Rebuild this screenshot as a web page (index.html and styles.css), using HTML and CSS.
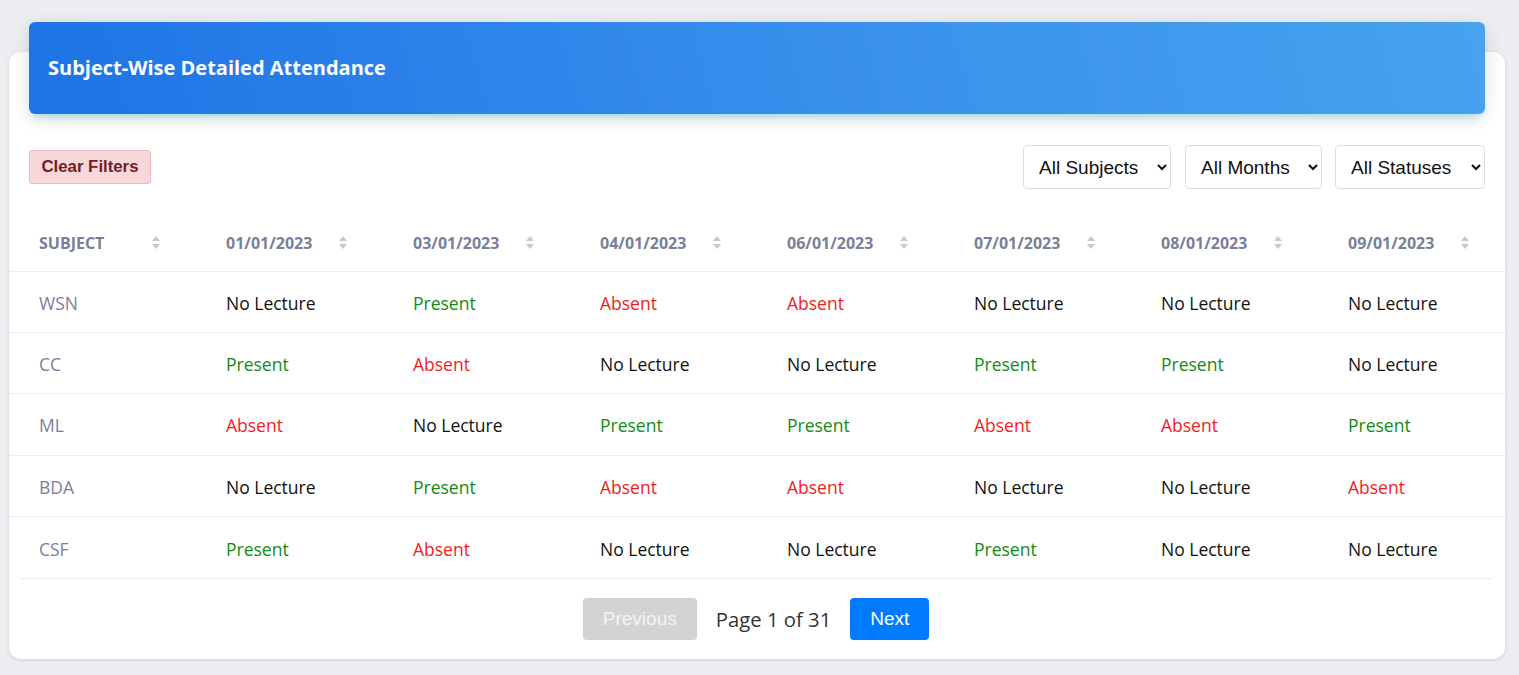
FILE: index.html
```html
<!DOCTYPE html>
<html>
<head>
<meta charset="utf-8">
<link rel="stylesheet" href="styles.css">
</head>
<body>
<div class="card">
  <div class="banner"><h2 class="title">Subject-Wise Detailed Attendance</h2></div>
  <div class="filters">
    <button class="clear">Clear Filters</button>
    <div class="selects">
      <select class="sel"><option>All Subjects</option></select>
      <select class="sel"><option>All Months</option></select>
      <select class="sel"><option>All Statuses</option></select>
    </div>
  </div>
  <table class="grid">
    <thead>
      <tr>
        <th>SUBJECT<span class="sort"><svg width="8" height="13" viewBox="0 0 8 13"><path d="M4 0L8 5H0Z" fill="#c5c8d6"/><path d="M4 13L8 8H0Z" fill="#c5c8d6"/></svg></span></th>
        <th>01/01/2023<span class="sort"><svg width="8" height="13" viewBox="0 0 8 13"><path d="M4 0L8 5H0Z" fill="#c5c8d6"/><path d="M4 13L8 8H0Z" fill="#c5c8d6"/></svg></span></th>
        <th>03/01/2023<span class="sort"><svg width="8" height="13" viewBox="0 0 8 13"><path d="M4 0L8 5H0Z" fill="#c5c8d6"/><path d="M4 13L8 8H0Z" fill="#c5c8d6"/></svg></span></th>
        <th>04/01/2023<span class="sort"><svg width="8" height="13" viewBox="0 0 8 13"><path d="M4 0L8 5H0Z" fill="#c5c8d6"/><path d="M4 13L8 8H0Z" fill="#c5c8d6"/></svg></span></th>
        <th>06/01/2023<span class="sort"><svg width="8" height="13" viewBox="0 0 8 13"><path d="M4 0L8 5H0Z" fill="#c5c8d6"/><path d="M4 13L8 8H0Z" fill="#c5c8d6"/></svg></span></th>
        <th>07/01/2023<span class="sort"><svg width="8" height="13" viewBox="0 0 8 13"><path d="M4 0L8 5H0Z" fill="#c5c8d6"/><path d="M4 13L8 8H0Z" fill="#c5c8d6"/></svg></span></th>
        <th>08/01/2023<span class="sort"><svg width="8" height="13" viewBox="0 0 8 13"><path d="M4 0L8 5H0Z" fill="#c5c8d6"/><path d="M4 13L8 8H0Z" fill="#c5c8d6"/></svg></span></th>
        <th>09/01/2023<span class="sort"><svg width="8" height="13" viewBox="0 0 8 13"><path d="M4 0L8 5H0Z" fill="#c5c8d6"/><path d="M4 13L8 8H0Z" fill="#c5c8d6"/></svg></span></th>
      </tr>
    </thead>
    <tbody>
      <tr><td class="subj">WSN</td><td class="nl">No Lecture</td><td class="p">Present</td><td class="a">Absent</td><td class="a">Absent</td><td class="nl">No Lecture</td><td class="nl">No Lecture</td><td class="nl">No Lecture</td></tr>
      <tr><td class="subj">CC</td><td class="p">Present</td><td class="a">Absent</td><td class="nl">No Lecture</td><td class="nl">No Lecture</td><td class="p">Present</td><td class="p">Present</td><td class="nl">No Lecture</td></tr>
      <tr><td class="subj">ML</td><td class="a">Absent</td><td class="nl">No Lecture</td><td class="p">Present</td><td class="p">Present</td><td class="a">Absent</td><td class="a">Absent</td><td class="p">Present</td></tr>
      <tr><td class="subj">BDA</td><td class="nl">No Lecture</td><td class="p">Present</td><td class="a">Absent</td><td class="a">Absent</td><td class="nl">No Lecture</td><td class="nl">No Lecture</td><td class="a">Absent</td></tr>
      <tr><td class="subj">CSF</td><td class="p">Present</td><td class="a">Absent</td><td class="nl">No Lecture</td><td class="nl">No Lecture</td><td class="p">Present</td><td class="nl">No Lecture</td><td class="nl">No Lecture</td></tr>
    </tbody>
  </table>
  <div class="pager">
    <button class="pbtn prev">Previous</button>
    <span class="pinfo">Page 1 of 31</span>
    <button class="pbtn next">Next</button>
  </div>
</div>
</body>
</html>
```

FILE: styles.css
```css
* { box-sizing: border-box; }
html, body { margin: 0; padding: 0; }
body {
  background: #eceef2;
  font-family: "Open Sans", "Noto Sans", sans-serif;
  padding: 52px 14px 16px 9px;
}
.card {
  background: #fff;
  border-radius: 12px;
  box-shadow: 0 1px 4px rgba(0,0,0,0.12);
  display: flex;
  flex-direction: column;
}
.banner {
  margin: -30px 20px 0 20px;
  height: 92px;
  border-radius: 6px;
  background: linear-gradient(75deg, #1e73e6 0%, #3890ec 55%, #47a2ef 100%);
  box-shadow: 0 4px 20px rgba(0,0,0,0.12), 0 7px 10px -5px rgba(0,188,212,0.35);
  display: flex;
  align-items: center;
  padding-left: 19px;
  padding-bottom: 2px;
}
.title {
  margin: 0;
  color: #fff;
  font-family: "Open Sans", sans-serif;
  font-weight: 700;
  font-size: 20px;
}
.filters {
  display: flex;
  justify-content: space-between;
  align-items: center;
  margin: 31px 20px 0 20px;
  height: 44px;
}
.clear {
  font-family: "Liberation Sans", Arial, sans-serif;
  font-weight: 700;
  font-size: 16.8px;
  color: #721c24;
  background: #f8d7da;
  border: 1px solid #f1b9bf;
  border-radius: 3px;
  height: 34px;
  width: 122px;
  padding: 0;
}
.selects { display: flex; gap: 14px; }
.sel {
  font-family: "Liberation Sans", Arial, sans-serif;
  font-size: 19px;
  color: #111;
  height: 44px;
  background: #fff;
  border: 1px solid #ddd;
  border-radius: 4px;
  padding: 0 8px 0 11px;
}
.sel:nth-child(1) { width: 148px; }
.sel:nth-child(2) { width: 137px; }
.sel:nth-child(3) { width: 150px; margin-left: -1px; }
.grid {
  width: 100%;
  border-collapse: collapse;
  table-layout: fixed;
  margin-top: 26px;
}
.grid th {
  position: relative;
  text-align: left;
  font-size: 16px;
  font-weight: 700;
  color: #7a7f99;
  padding: 0 30px;
  height: 56px;
  border-bottom: 1px solid #ebecf0;
}
.sort {
  position: absolute;
  right: 36px;
  top: 21px;
  line-height: 0;
}
.grid td {
  font-size: 17.5px;
  padding: 2px 30px 0 30px;
  height: 61.4px;
  border-bottom: 1px solid #ebecf0;
  color: #111;
}
.grid tbody tr:last-child td { border-bottom: none; }
.grid td.subj { color: #7a7f99; }
.grid td.p { color: #138a13; }
.grid td.a { color: #f21c1c; }
.grid td.nl { color: #111; }
.pager {
  margin: 0 13px 0 11px;
  border-top: 1px solid #ebecf0;
  display: flex;
  justify-content: center;
  align-items: center;
  gap: 19px;
  padding: 19px 0 19px 0;
}
.pbtn {
  font-family: "Liberation Sans", Arial, sans-serif;
  font-size: 19px;
  height: 42px;
  border: none;
  border-radius: 4px;
  padding: 0;
}
.prev { background: #d3d3d3; color: #f4f4f4; width: 114px; }
.next { background: #007bff; color: #fff; width: 79px; }
.pinfo { font-size: 20.3px; color: #333; }
```
